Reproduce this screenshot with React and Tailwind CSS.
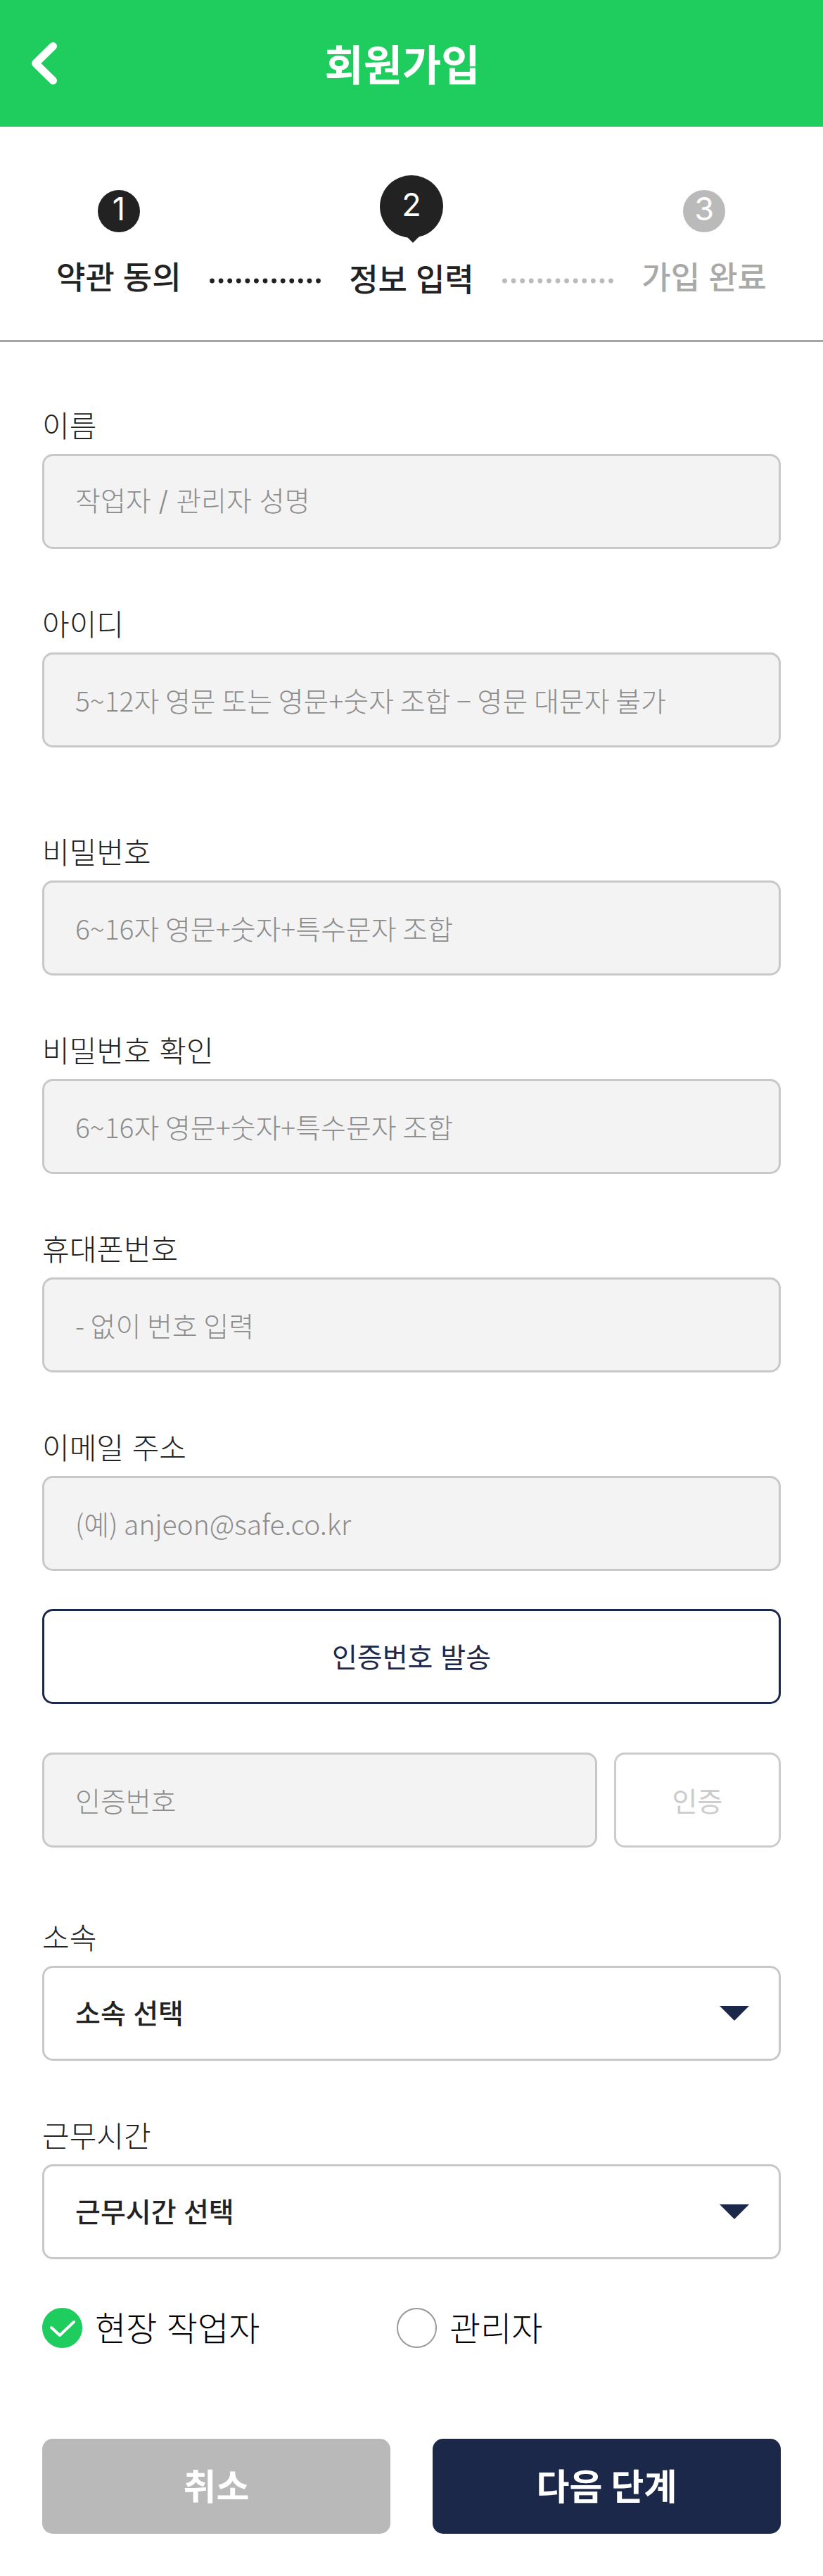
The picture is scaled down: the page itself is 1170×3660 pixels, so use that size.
import { useState } from "react";

const boxClass =
  "h-[135px] w-full min-w-0 rounded-[15px] border-3 border-[#c8c8c8] px-[44px] text-[39px] outline-none";

function BackIcon() {
  return (
    <svg viewBox="0 0 38 60" className="h-[60px] w-[38px]" aria-hidden="true">
      <path d="M31.5 5.5 L6.5 30 L31.5 54.5" fill="none" stroke="#fff" strokeWidth="11" strokeLinecap="round" strokeLinejoin="round" />
    </svg>
  );
}

function Header() {
  return (
    <header className="grid h-[180px] grid-cols-[1fr_auto_1fr] items-center bg-[#1fcd5e] pr-[70px] pl-[44px]">
      <button type="button" aria-label="뒤로" className="justify-self-start">
        <BackIcon />
      </button>
      <h1 className="pb-[2px] text-[60px] leading-[86px] font-bold text-white">회원가입</h1>
    </header>
  );
}

function Dots({ className }) {
  return (
    <svg viewBox="0 0 158 8" className={`mb-[80px] h-[8px] w-[158px] shrink-0 self-end ${className}`} aria-hidden="true">
      {Array.from({ length: 13 }, (_, i) => (
        <circle key={i} cx={3.5 + i * (151 / 12)} cy="4" r="3.4" fill="currentColor" />
      ))}
    </svg>
  );
}

function Step({ number, label, circle, text }) {
  return (
    <li className="flex flex-col items-center">
      <span className={`mt-[90px] flex size-[60px] items-center justify-center rounded-full pb-[6px] text-[45px] leading-[54px] text-white ${circle}`}>
        {number}
      </span>
      <span className={`mt-[32px] text-[45px] leading-[66px] font-medium whitespace-nowrap ${text}`}>{label}</span>
    </li>
  );
}

function CurrentStep({ number, label }) {
  return (
    <li className="flex flex-col items-center" aria-current="step">
      <span className="relative mt-[69px] flex h-[96px] w-[90px] justify-center">
        <svg viewBox="0 0 90 96" className="absolute inset-0" aria-hidden="true">
          <ellipse cx="45" cy="44.5" rx="45" ry="44.5" fill="#222" />
          <path d="M36 85 L47 96 L59 84 Z" fill="#222" />
        </svg>
        <span className="relative text-[45px] leading-[84px] text-white">{number}</span>
      </span>
      <span className="mt-[20px] text-[45px] leading-[66px] font-medium whitespace-nowrap text-[#222]">{label}</span>
    </li>
  );
}

function Steps() {
  return (
    <ol className="flex h-[306px] items-start justify-between border-b-3 border-[#a5a5a5] px-[80px] font-['Inter','Noto_Sans_CJK_KR',sans-serif]">
      <Step number="1" label="약관 동의" circle="bg-[#222]" text="text-[#222]" />
      <Dots className="text-[#222]" />
      <CurrentStep number="2" label="정보 입력" />
      <Dots className="text-[#bababa]" />
      <Step number="3" label="가입 완료" circle="bg-[#bababa]" text="text-[#a9a9a9]" />
    </ol>
  );
}

function Label({ htmlFor, children }) {
  return (
    <label
      htmlFor={htmlFor}
      className="mb-[6px] block font-['Inter','Noto_Sans_CJK_KR',sans-serif] text-[42px] leading-[66px] font-light text-[#222]"
    >
      {children}
    </label>
  );
}

function TextBox({ className = "", ...rest }) {
  return (
    <input
      className={`${boxClass} bg-[#f3f3f3] pb-[2px] font-light text-[#222] placeholder:text-[#8c8c8c] placeholder:opacity-100 ${className}`}
      {...rest}
    />
  );
}

function Field({ id, label, ...rest }) {
  return (
    <div>
      <Label htmlFor={id}>{label}</Label>
      <TextBox id={id} {...rest} />
    </div>
  );
}

function SelectField({ id, label, placeholder }) {
  return (
    <div>
      <Label htmlFor={id}>{label}</Label>
      <div className="relative font-['Inter','Noto_Sans_CJK_KR',sans-serif]">
        <select id={id} className={`${boxClass} appearance-none bg-white pt-[2px] font-medium text-[#222]`}>
          <option>{placeholder}</option>
        </select>
        <svg viewBox="0 0 42 21" className="pointer-events-none absolute top-[57px] right-[45px] h-[21px] w-[42px]" aria-hidden="true">
          <path d="M0 0 H42 L21 21 Z" fill="#1c2849" />
        </svg>
      </div>
    </div>
  );
}

function RoleOption({ value, label, checked, onSelect }) {
  return (
    <label className="flex items-center gap-[18px] text-[48px] leading-[69px] font-light text-black">
      <span className="relative size-[57px]">
        <input
          type="radio"
          name="role"
          value={value}
          checked={checked}
          onChange={() => onSelect(value)}
          className="block size-[57px] appearance-none rounded-full border-2 border-[#999] bg-white checked:border-[#1fcd5e] checked:bg-[#1fcd5e]"
        />
        {checked && (
          <svg viewBox="0 0 57 57" className="pointer-events-none absolute inset-0" aria-hidden="true">
            <path d="M13 28 L25 39 L45 20" fill="none" stroke="#fff" strokeWidth="4" strokeLinecap="round" strokeLinejoin="round" />
          </svg>
        )}
      </span>
      <span className="pt-[2px]">{label}</span>
    </label>
  );
}

export default function App() {
  const [role, setRole] = useState("worker");

  return (
    <div className="min-h-screen bg-white font-['Noto_Sans_CJK_KR',sans-serif]">
      <Header />
      <Steps />
      <form className="px-[60px] pt-[87px] pb-[60px]" onSubmit={(e) => e.preventDefault()}>
        <div className="flex flex-col gap-[75px]">
          <Field
            id="name"
            label="이름"
            placeholder="작업자 / 관리자 성명"
            className="font-['Inter','Noto_Sans_CJK_KR',sans-serif]"
          />
          <Field id="userid" label="아이디" placeholder="5~12자 영문 또는 영문+숫자 조합 − 영문 대문자 불가" />
        </div>
        <div className="mt-[117px] flex flex-col gap-[75px]">
          <Field id="password" type="password" label="비밀번호" placeholder="6~16자 영문+숫자+특수문자 조합" />
          <Field id="password-check" type="password" label="비밀번호 확인" placeholder="6~16자 영문+숫자+특수문자 조합" />
          <Field id="phone" type="tel" label="휴대폰번호" placeholder="- 없이 번호 입력" />
          <Field id="email" type="email" label="이메일 주소" placeholder="(예) anjeon@safe.co.kr" />
        </div>
        <button
          type="button"
          className="mt-[54px] block h-[135px] w-full rounded-[15px] border-3 border-[#1c2849] pt-[3px] font-['Inter','Noto_Sans_CJK_KR',sans-serif] text-[39px] text-[#1c2849]"
        >
          인증번호 발송
        </button>
        <div className="mt-[69px] flex gap-[24px]">
          <TextBox id="code" aria-label="인증번호" placeholder="인증번호" />
          <button type="button" className="h-[135px] w-[237px] shrink-0 rounded-[15px] border-3 border-[#ccc] text-[39px] text-[#ccc]">
            인증
          </button>
        </div>
        <div className="mt-[96px] flex flex-col gap-[75px]">
          <SelectField id="company" label="소속" placeholder="소속 선택" />
          <SelectField id="hours" label="근무시간" placeholder="근무시간 선택" />
        </div>
        <div className="mt-[62px] grid grid-cols-[504px_1fr] font-['Inter','Noto_Sans_CJK_KR',sans-serif]">
          <RoleOption value="worker" label="현장 작업자" checked={role === "worker"} onSelect={setRole} />
          <RoleOption value="manager" label="관리자" checked={role === "manager"} onSelect={setRole} />
        </div>
        <div className="mt-[122px] grid grid-cols-2 gap-[60px] font-['Inter','Noto_Sans_CJK_KR',sans-serif] text-[51px] font-bold text-white">
          <button type="button" className="h-[135px] rounded-[15px] bg-[#b9b9b9] pt-[4px]">취소</button>
          <button type="submit" className="h-[135px] rounded-[15px] bg-[#1c2849] pt-[4px]">다음 단계</button>
        </div>
      </form>
    </div>
  );
}
